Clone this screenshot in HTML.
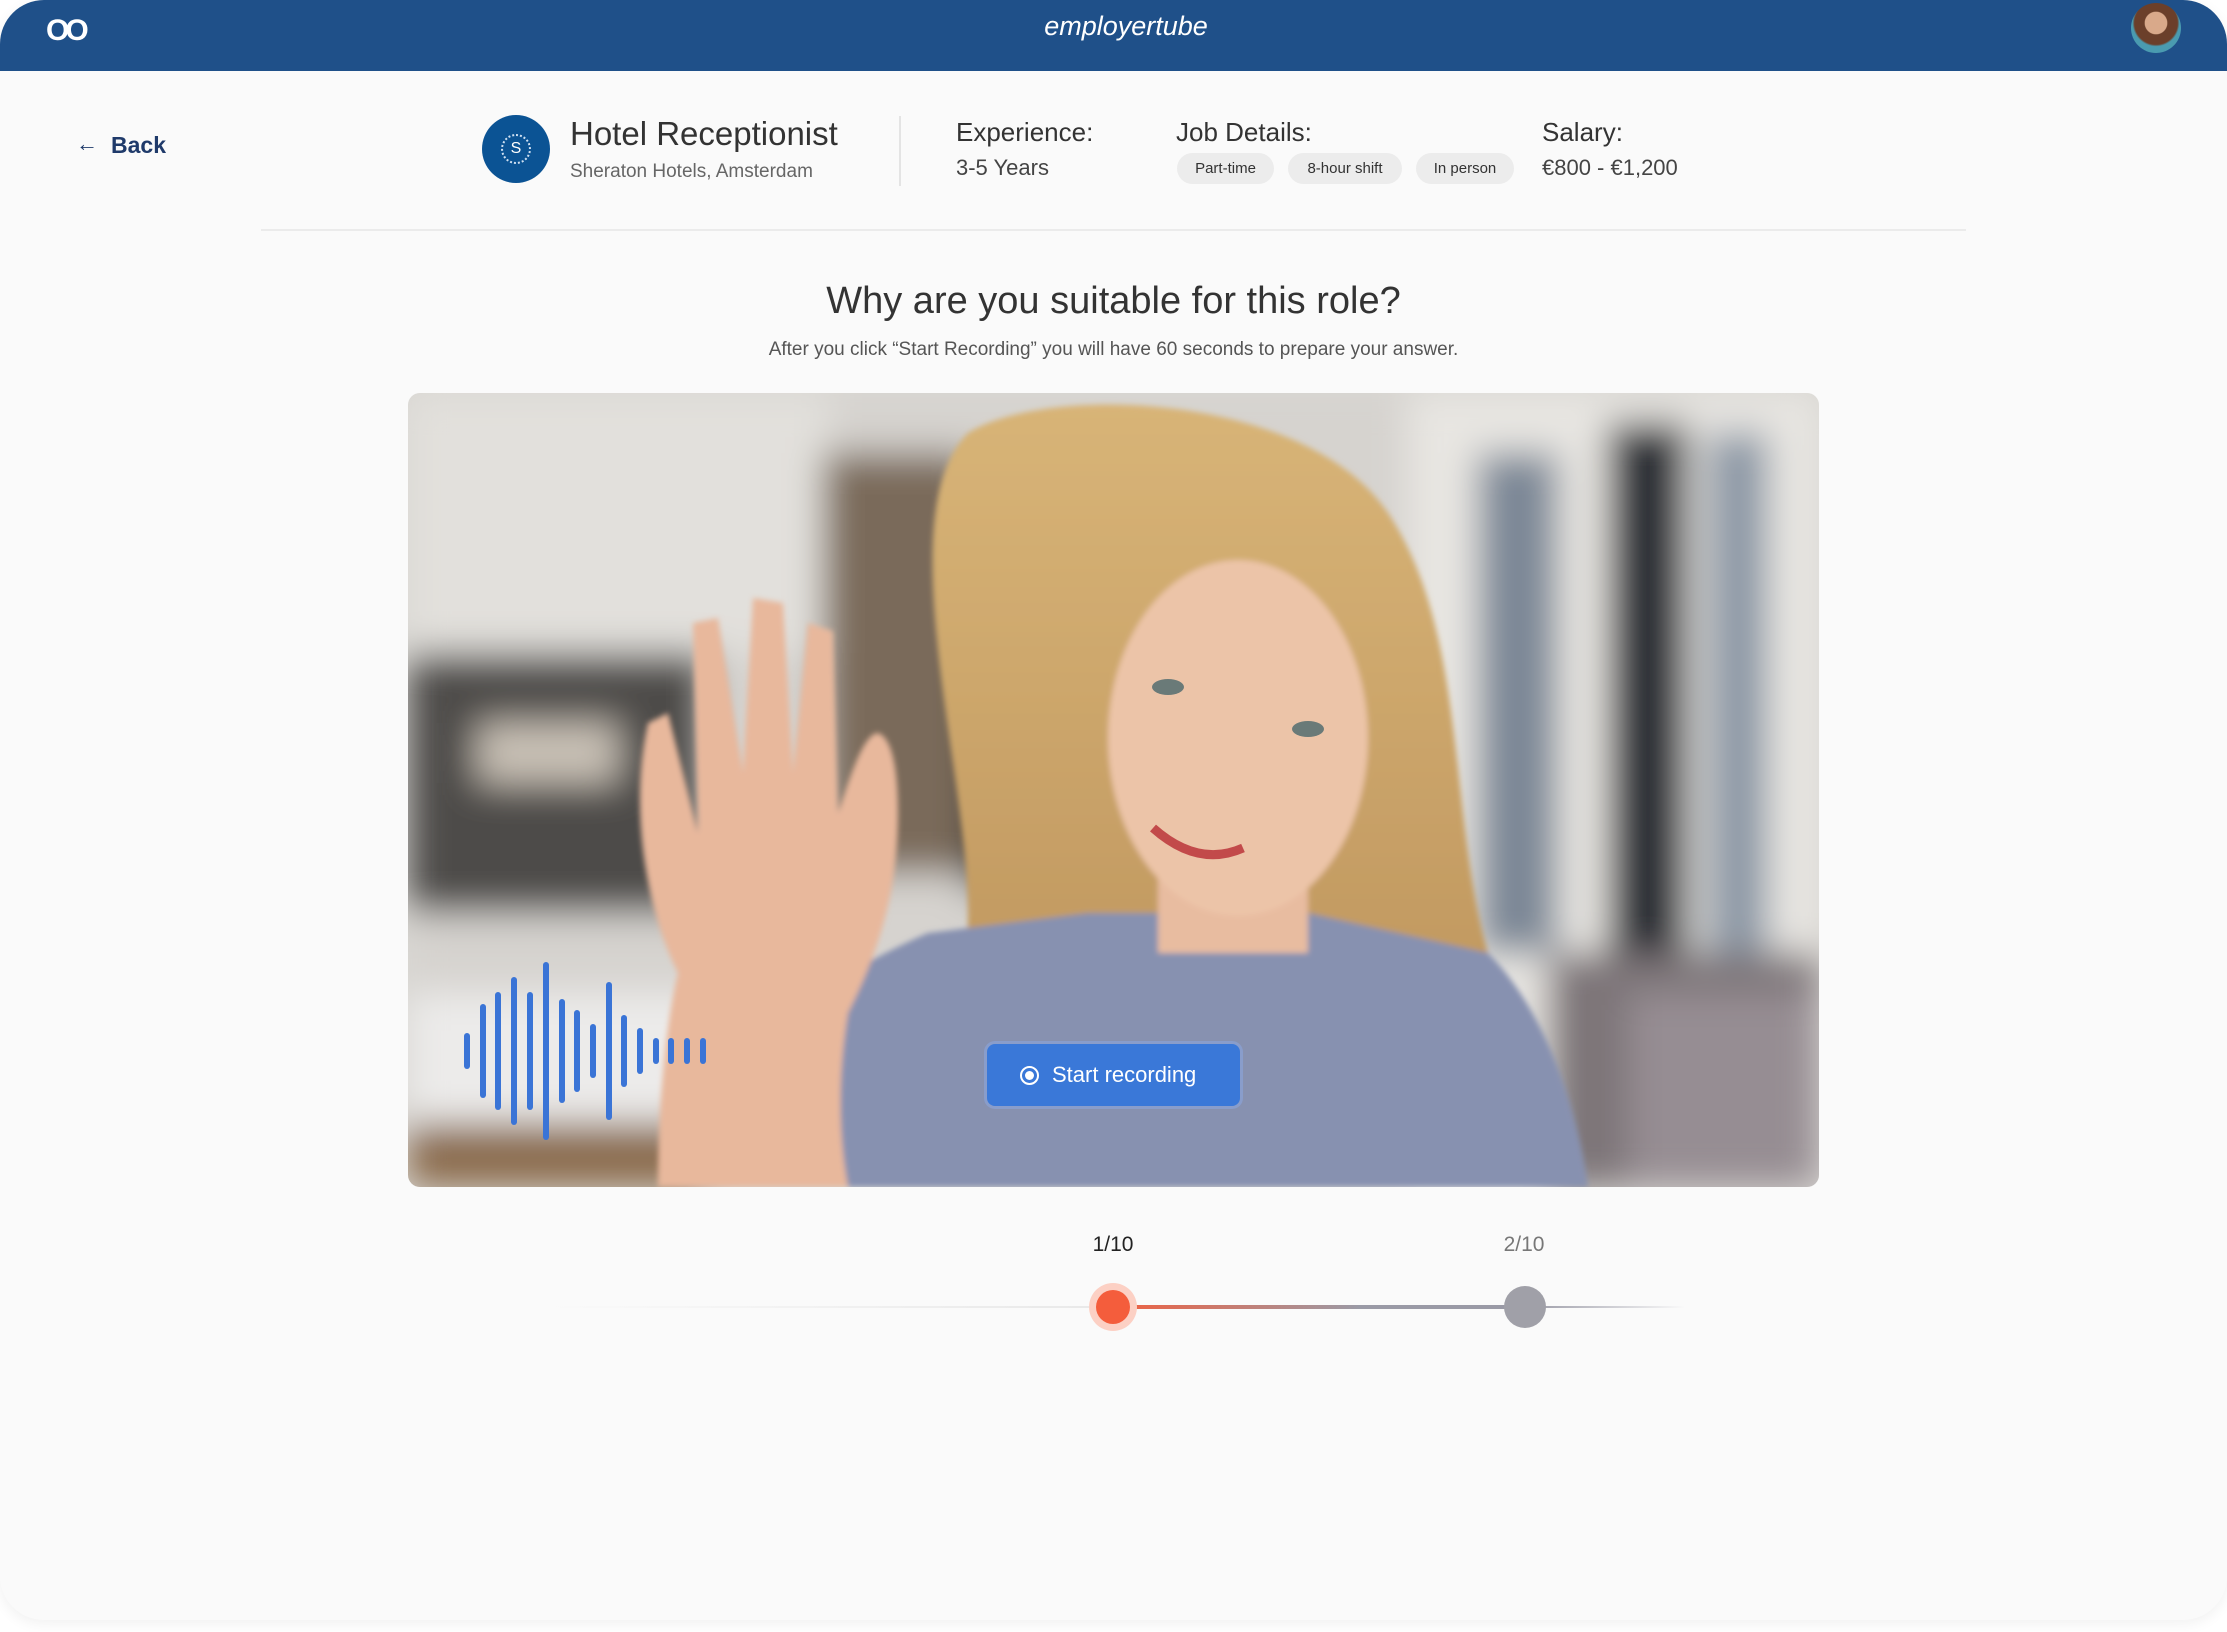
<!DOCTYPE html>
<html><head><meta charset="utf-8"><style>
*{margin:0;padding:0;box-sizing:border-box}
body{width:2227px;height:1632px;background:#fff;font-family:"Liberation Sans",sans-serif;position:relative;overflow:hidden}
.card{position:absolute;left:0;top:0;width:2227px;height:1620px;background:#fafafa;border-radius:44px;box-shadow:0 4px 14px rgba(0,0,0,.06);overflow:hidden}
.hdr{position:absolute;left:0;top:0;width:2227px;height:71px;background:#1f5089}
.abs{position:absolute;white-space:nowrap}
.chip{position:absolute;top:153px;height:31px;border-radius:16px;background:#ececec;font-size:15px;color:#333;text-align:center;line-height:31px}
</style></head><body>
<div class="card">
<div class="hdr"></div>
<div class="abs" style="left:46px;top:14px;color:#fff;font-size:30px;font-weight:bold;letter-spacing:-4px">OO</div>
<div class="abs" style="left:1040px;top:11px;width:172px;text-align:center;color:#fff;font-size:27px;font-style:italic">employertube</div>
<div class="abs" style="left:2131px;top:3px;width:50px;height:50px;border-radius:50%;background:radial-gradient(circle at 50% 40%,#d9a98a 0 28%,#6b3f2a 30% 55%,#4a9bb0 60%)"></div>

<div class="abs" style="left:76px;top:131px;font-size:22px;color:#1f3a6a">&#8592;</div>
<div class="abs" style="left:111px;top:132px;font-size:23px;color:#1f3a6a;font-weight:bold">Back</div>

<div class="abs" style="left:482px;top:115px;width:68px;height:68px;border-radius:50%;background:#0b5394"></div>
<div class="abs" style="left:501px;top:134px;width:30px;height:30px;border-radius:50%;border:2px dotted #cfe0f2;color:#fff;font-size:16px;text-align:center;line-height:26px">S</div>
<div class="abs" style="left:570px;top:115px;font-size:33px;color:#333">Hotel Receptionist</div>
<div class="abs" style="left:570px;top:161px;font-size:19px;color:#666">Sheraton Hotels, Amsterdam</div>
<div class="abs" style="left:899px;top:116px;width:2px;height:70px;background:#e4e4e4"></div>
<div class="abs" style="left:956px;top:117px;font-size:26px;color:#333">Experience:</div>
<div class="abs" style="left:956px;top:155px;font-size:22px;color:#444">3-5 Years</div>
<div class="abs" style="left:1176px;top:117px;font-size:26px;color:#333">Job Details:</div>
<div class="chip" style="left:1177px;width:97px">Part-time</div>
<div class="chip" style="left:1288px;width:114px">8-hour shift</div>
<div class="chip" style="left:1416px;width:98px">In person</div>
<div class="abs" style="left:1542px;top:117px;font-size:26px;color:#333">Salary:</div>
<div class="abs" style="left:1542px;top:155px;font-size:22px;color:#444">€800 - €1,200</div>
<div class="abs" style="left:261px;top:229px;width:1705px;height:2px;background:#ebebeb"></div>

<div class="abs" style="left:0;top:280px;width:2227px;text-align:center;font-size:38px;color:#333">Why are you suitable for this role?</div>
<div class="abs" style="left:0;top:339px;width:2227px;text-align:center;font-size:19px;color:#555">After you click “Start Recording” you will have 60 seconds to prepare your answer.</div>

<div class="abs" style="left:408px;top:393px;width:1411px;height:794px;border-radius:12px;overflow:hidden;background:#d9d7d3">
<svg width="1411" height="794" viewBox="0 0 1411 794">
<defs><filter id="b"><feGaussianBlur stdDeviation="18"/></filter><filter id="s"><feGaussianBlur stdDeviation="3"/></filter>
<linearGradient id="hair" x1="0" y1="0" x2="0" y2="1"><stop offset="0" stop-color="#d8b477"/><stop offset="1" stop-color="#b98f58"/></linearGradient></defs>
<g filter="url(#b)">
<rect x="0" y="0" width="1411" height="794" fill="#d6d3cf"/>
<rect x="0" y="0" width="420" height="260" fill="#e2e0dc"/>
<rect x="415" y="60" width="150" height="420" fill="#7a6a5a"/>
<rect x="560" y="100" width="70" height="400" fill="#3a3836"/>
<rect x="1000" y="0" width="411" height="794" fill="#e8e6e2"/>
<rect x="1070" y="60" width="80" height="500" fill="#7c8796"/>
<rect x="1200" y="30" width="80" height="560" fill="#2a2f36"/>
<rect x="1300" y="40" width="60" height="560" fill="#8b97a5"/>
<rect x="0" y="260" width="300" height="260" fill="#4d4b49"/>
<rect x="70" y="330" width="140" height="60" fill="#c9c1b6"/>
<rect x="0" y="600" width="310" height="130" fill="#ecebea"/>
<rect x="0" y="730" width="300" height="64" fill="#8a6a4c"/>
<rect x="1140" y="560" width="271" height="234" fill="#7d7478"/>
<rect x="1220" y="600" width="191" height="194" fill="#968d93"/>
</g>
<g filter="url(#s)">
<path d="M560 40 C640 -10 900 0 980 120 C1060 240 1040 420 1080 560 C1110 660 1140 740 1150 794 L500 794 C520 700 560 620 560 520 C560 380 480 120 560 40Z" fill="url(#hair)"/>
<path d="M260 794 C280 700 380 600 520 540 L680 520 L900 520 L1080 560 C1140 620 1170 720 1180 794Z" fill="#8791b0"/>
<rect x="750" y="440" width="150" height="120" fill="#e8bca0"/>
<ellipse cx="830" cy="345" rx="130" ry="178" fill="#ecc4a8"/>
<path d="M250 794 C250 700 260 620 270 580 C240 520 220 420 240 330 L260 320 L290 440 L285 230 L310 225 L335 380 L345 205 L375 210 L385 380 L400 230 L425 238 L430 420 C440 390 455 340 470 340 C485 345 490 380 490 420 C490 500 470 560 440 620 C430 680 430 740 440 794Z" fill="#e8b89c"/>
</g>
<ellipse cx="760" cy="294" rx="16" ry="8" fill="#6a7a78"/>
<ellipse cx="900" cy="336" rx="16" ry="8" fill="#6a7a78"/>
<path d="M745 435 Q790 475 835 455" stroke="#c24a4a" stroke-width="9" fill="none"/>
</svg>
</div>

<svg class="abs" style="left:460px;top:960px" width="260" height="185">
<g stroke="#3a74d6" stroke-width="6" stroke-linecap="round">
<line x1="7" y1="76" x2="7" y2="106"/>
<line x1="23" y1="47" x2="23" y2="135"/>
<line x1="38" y1="35" x2="38" y2="147"/>
<line x1="54" y1="20" x2="54" y2="162"/>
<line x1="70" y1="35" x2="70" y2="147"/>
<line x1="86" y1="5" x2="86" y2="177"/>
<line x1="102" y1="42" x2="102" y2="140"/>
<line x1="117" y1="53" x2="117" y2="129"/>
<line x1="133" y1="67" x2="133" y2="115"/>
<line x1="149" y1="25" x2="149" y2="157"/>
<line x1="164" y1="58" x2="164" y2="124"/>
<line x1="180" y1="71" x2="180" y2="111"/>
<line x1="196" y1="81" x2="196" y2="101"/>
<line x1="211" y1="81" x2="211" y2="101"/>
<line x1="227" y1="81" x2="227" y2="101"/>
<line x1="243" y1="81" x2="243" y2="101"/>
</g></svg>

<div class="abs" style="left:987px;top:1044px;width:253px;height:62px;border-radius:8px;background:#3a78d8;box-shadow:0 0 0 3px rgba(140,170,230,.5);color:#fff;font-size:22px;line-height:62px;padding-left:65px">Start recording</div>
<div class="abs" style="left:1020px;top:1066px;width:19px;height:19px;border-radius:50%;border:2.5px solid #fff"></div>
<div class="abs" style="left:1025px;top:1071px;width:9px;height:9px;border-radius:50%;background:#fff"></div>

<div class="abs" style="left:1063px;top:1233px;width:100px;text-align:center;font-size:21px;color:#222">1/10</div>
<div class="abs" style="left:1474px;top:1233px;width:100px;text-align:center;font-size:21px;color:#777">2/10</div>
<div class="abs" style="left:540px;top:1306px;width:573px;height:2px;background:linear-gradient(90deg,rgba(220,220,220,0),#e8e8e8)"></div>
<div class="abs" style="left:1113px;top:1305px;width:412px;height:4px;background:linear-gradient(90deg,#f06040,#9a9aa6 60%)"></div>
<div class="abs" style="left:1525px;top:1306px;width:160px;height:2px;background:linear-gradient(90deg,#9a9aa6,rgba(220,220,220,0))"></div>
<div class="abs" style="left:1089px;top:1283px;width:48px;height:48px;border-radius:50%;background:#fcd0c4"></div>
<div class="abs" style="left:1096px;top:1290px;width:34px;height:34px;border-radius:50%;background:#f45d3c"></div>
<div class="abs" style="left:1504px;top:1286px;width:42px;height:42px;border-radius:50%;background:#a0a0a8"></div>
</div>
</body></html>
